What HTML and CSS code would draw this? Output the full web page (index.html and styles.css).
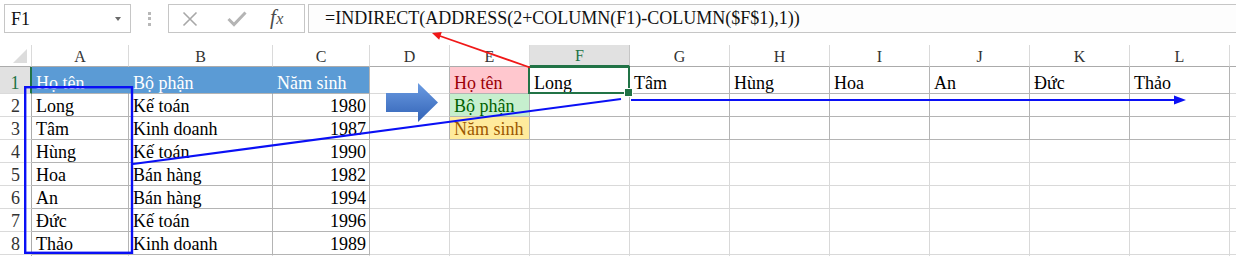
FILE: index.html
```html
<!DOCTYPE html>
<html lang="vi">
<head>
<meta charset="utf-8">
<title>Excel INDIRECT</title>
<link rel="stylesheet" href="styles.css">
</head>
<body>
<div class="app">
  <div class="fbar">
    <div class="namebox"><span class="nm">F1</span><span class="dd"></span></div>
    <div class="dots"><i></i><i></i><i></i></div>
    <div class="btns">
      <svg class="ic-x" width="16" height="16" viewBox="0 0 16 16"><path d="M1.5 1.5 L14.5 14.5 M14.5 1.5 L1.5 14.5" stroke="#a8a8a8" stroke-width="1.6" fill="none"/></svg>
      <svg class="ic-ok" width="20" height="16" viewBox="0 0 20 16"><path d="M1.5 8 L7 13.5 L18.5 1.5" stroke="#b4b4b4" stroke-width="3" fill="none"/></svg>
      <span class="fx">f<span class="fxx">x</span></span>
    </div>
    <div class="formula">=INDIRECT(ADDRESS(2+COLUMN(F1)-COLUMN($F$1),1))</div>
  </div>

  <div class="sheet">
    <!-- header row -->
    <div class="c ch corner"><span class="tri"></span></div>
    <div class="c ch">A</div><div class="c ch">B</div><div class="c ch">C</div><div class="c ch">D</div>
    <div class="c ch">E</div><div class="c ch selc">F</div><div class="c ch">G</div><div class="c ch">H</div>
    <div class="c ch">I</div><div class="c ch">J</div><div class="c ch">K</div><div class="c ch">L</div><div class="c ch last"></div>

    <!-- row 1 -->
    <div class="c rh selr">1</div>
    <div class="c b hd">Họ tên</div><div class="c b hd">Bộ phận</div><div class="c b hd hdl">Năm sinh</div>
    <div class="c br"></div>
    <div class="c b pink">Họ tên</div>
    <div class="c b sel">Long</div>
    <div class="c b">Tâm</div><div class="c b">Hùng</div><div class="c b">Hoa</div><div class="c b">An</div><div class="c b">Đức</div><div class="c b">Thảo</div>
    <div class="c last"></div>

    <!-- row 2 -->
    <div class="c rh">2</div>
    <div class="c b">Long</div><div class="c b">Kế toán</div><div class="c b num">1980</div>
    <div class="c br"></div>
    <div class="c b green">Bộ phận</div>
    <div class="c b"></div><div class="c b"></div><div class="c b"></div><div class="c b"></div><div class="c b"></div><div class="c b"></div><div class="c b"></div>
    <div class="c last"></div>

    <!-- row 3 -->
    <div class="c rh">3</div>
    <div class="c b">Tâm</div><div class="c b">Kinh doanh</div><div class="c b num">1987</div>
    <div class="c br"></div>
    <div class="c b yellow">Năm sinh</div>
    <div class="c b"></div><div class="c b"></div><div class="c b"></div><div class="c b"></div><div class="c b"></div><div class="c b"></div><div class="c b"></div>
    <div class="c last"></div>

    <!-- row 4 -->
    <div class="c rh">4</div>
    <div class="c b">Hùng</div><div class="c b">Kế toán</div><div class="c b num">1990</div>
    <div class="c"></div><div class="c"></div><div class="c"></div><div class="c"></div><div class="c"></div><div class="c"></div><div class="c"></div><div class="c"></div><div class="c"></div>
    <div class="c last"></div>

    <!-- row 5 -->
    <div class="c rh">5</div>
    <div class="c b">Hoa</div><div class="c b">Bán hàng</div><div class="c b num">1982</div>
    <div class="c"></div><div class="c"></div><div class="c"></div><div class="c"></div><div class="c"></div><div class="c"></div><div class="c"></div><div class="c"></div><div class="c"></div>
    <div class="c last"></div>

    <!-- row 6 -->
    <div class="c rh">6</div>
    <div class="c b">An</div><div class="c b">Bán hàng</div><div class="c b num">1994</div>
    <div class="c"></div><div class="c"></div><div class="c"></div><div class="c"></div><div class="c"></div><div class="c"></div><div class="c"></div><div class="c"></div><div class="c"></div>
    <div class="c last"></div>

    <!-- row 7 -->
    <div class="c rh">7</div>
    <div class="c b">Đức</div><div class="c b">Kế toán</div><div class="c b num">1996</div>
    <div class="c"></div><div class="c"></div><div class="c"></div><div class="c"></div><div class="c"></div><div class="c"></div><div class="c"></div><div class="c"></div><div class="c"></div>
    <div class="c last"></div>

    <!-- row 8 -->
    <div class="c rh">8</div>
    <div class="c b">Thảo</div><div class="c b">Kinh doanh</div><div class="c b num">1989</div>
    <div class="c"></div><div class="c"></div><div class="c"></div><div class="c"></div><div class="c"></div><div class="c"></div><div class="c"></div><div class="c"></div><div class="c"></div>
    <div class="c last"></div>

    <!-- row 9 -->
    <div class="c rh r9"></div>
    <div class="c"></div><div class="c"></div><div class="c"></div>
    <div class="c"></div><div class="c"></div><div class="c"></div><div class="c"></div><div class="c"></div><div class="c"></div><div class="c"></div><div class="c"></div><div class="c"></div>
    <div class="c last"></div>
  </div>

  <svg class="overlay" width="1236" height="256" viewBox="0 0 1236 256">
    <defs>
      <linearGradient id="ba" x1="0" y1="0" x2="0" y2="1">
        <stop offset="0" stop-color="#6b9ce2"/>
        <stop offset="1" stop-color="#3262b6"/>
      </linearGradient>
    </defs>
    <polygon points="386,93 418,93 418,83 438,102.5 418,122 418,112 386,112" fill="url(#ba)"/>
    <rect x="25.2" y="87.2" width="106.8" height="165.6" fill="none" stroke="#0a10f5" stroke-width="2.4"/>
    <line x1="133" y1="164" x2="621" y2="99" stroke="#0a10f5" stroke-width="2"/>
    <line x1="631" y1="100" x2="1176" y2="100" stroke="#0a10f5" stroke-width="2"/>
    <polygon points="1186,100 1174,95.5 1174,104.5" fill="#0a10f5"/>
    <line x1="530" y1="67.5" x2="440" y2="36" stroke="#f01818" stroke-width="1.8"/>
    <polygon points="432,33 441.8,32 439.2,39.8" fill="#f01818"/>
  </svg>
</div>
</body>
</html>
```

FILE: styles.css
```css
* { box-sizing: border-box; margin: 0; padding: 0; }

body {
  margin: 0;
  width: 1236px;
  height: 256px;
  overflow: hidden;
  background: #ffffff;
  font-family: "Liberation Serif", "Times New Roman", serif;
  color: #000;
}

.app {
  position: relative;
  width: 1236px;
  height: 256px;
  overflow: hidden;
  background: #fff;
}

/* ---------- formula bar ---------- */
.fbar {
  display: flex;
  align-items: flex-start;
  height: 45px;
  padding: 4px 0 0 4px;
  background: #fff;
}

.namebox {
  display: flex;
  align-items: center;
  justify-content: space-between;
  width: 127px;
  height: 29px;
  border: 1px solid #c6c6c6;
  background: #fff;
  padding: 0 9px 0 6px;
}

.nm { font-size: 18px; line-height: 20px; color: #111; }

.dd {
  width: 0;
  height: 0;
  border-left: 3.5px solid transparent;
  border-right: 3.5px solid transparent;
  border-top: 4px solid #6a6a6a;
}

.dots {
  width: 37px;
  height: 29px;
  display: flex;
  flex-direction: column;
  align-items: center;
  justify-content: center;
  gap: 2.5px;
}
.dots i {
  display: block;
  width: 3px;
  height: 3px;
  background: #b8b8b8;
}

.btns {
  display: flex;
  align-items: center;
  width: 137px;
  height: 29px;
  border: 1px solid #c6c6c6;
  background: #fff;
  padding: 0 0 0 13px;
}
.ic-x { margin-right: 29px; }
.ic-ok { margin-right: 23px; margin-top: 1px; }
.fx {
  font-style: italic;
  font-size: 21px;
  line-height: 20px;
  color: #4c4c4c;
  margin-top: -1px;
}
.fxx { font-size: 16px; margin-left: 0.5px; }

.formula {
  flex: 1;
  height: 29px;
  margin-left: 3px;
  border: 1px solid #c6c6c6;
  border-right: none;
  background: #fdfdfd;
  font-size: 18px;
  line-height: 27px;
  padding-left: 16px;
  white-space: nowrap;
  color: #111;
}

/* ---------- sheet grid ---------- */
.sheet {
  display: grid;
  grid-template-columns: 32px 97px 144px 97px 80px 80px repeat(7, 100px) 7px;
  grid-template-rows: 22px 27px repeat(7, 23px) 23px;
}

.c {
  position: relative;
  display: flex;
  align-items: flex-end;
  padding: 0 4px;
  border-right: 1px solid #d9d9d9;
  border-bottom: 1px solid #d9d9d9;
  font-size: 18px;
  line-height: 20px;
  white-space: nowrap;
  overflow: visible;
}

.c.last { border-right: none; }

/* column headers */
.ch {
  justify-content: center;
  align-items: flex-end;
  font-size: 16px;
  line-height: 18px;
  color: #333;
  border-right: 1px solid #dadada;
  border-bottom: 1px solid #ababab;
  background: #fff;
}
.corner { position: relative; }
.tri {
  position: absolute;
  right: 4px;
  bottom: 3px;
  width: 0;
  height: 0;
  border-left: 14px solid transparent;
  border-bottom: 14px solid #dcdcdc;
}
.selc {
  background: #e1e1e1;
  color: #217346;
  border-bottom: 2px solid #217346;
  border-right-color: #c6c6c6;
}

/* row headers */
.rh {
  justify-content: center;
  font-size: 18px;
  color: #333;
  border-right: 1px solid #ababab;
  border-bottom: 1px solid #dadada;
  padding: 0;
}
.selr {
  background: #e1e1e1;
  color: #217346;
  border-right: 2px solid #217346;
}

/* bordered cells */
.b {
  border-right-color: #b4b4b4;
  border-bottom-color: #b4b4b4;
}
.br { border-right-color: #b4b4b4; }

.num { justify-content: flex-end; padding-right: 3px; }

.hd {
  background: #5b9bd5;
  color: #fff;
  border-right-color: #5b9bd5;
}
.hdl { border-right-color: #b4b4b4; }

.pink { background: #ffc7ce; color: #9c0006; }
.green { background: #c6efce; color: #006100; }
.yellow { background: #ffeb9c; color: #9c5700; }

/* active cell */
.sel::after {
  content: "";
  position: absolute;
  left: -2px;
  top: -1px;
  right: -1px;
  bottom: -1px;
  border: 2px solid #217346;
  pointer-events: none;
}
.sel::before {
  content: "";
  position: absolute;
  right: -4px;
  bottom: -4px;
  width: 7px;
  height: 7px;
  background: #217346;
  border: 1px solid #fff;
  z-index: 2;
}

/* ---------- overlay drawing ---------- */
.overlay {
  position: absolute;
  left: 0;
  top: 0;
  pointer-events: none;
}
```
